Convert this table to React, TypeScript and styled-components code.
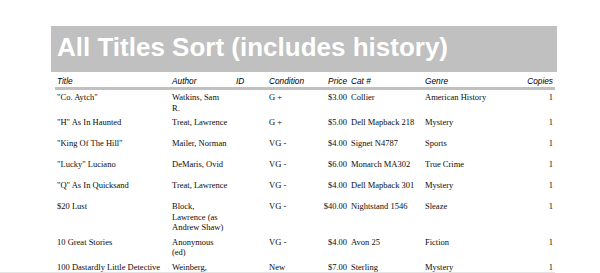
import React from "react";
import styled, { createGlobalStyle } from "styled-components";

const GlobalStyle = createGlobalStyle`
  html, body {
    margin: 0;
    padding: 0;
    background: #ffffff;
  }
  body {
    overflow: hidden;
  }
`;

const Page = styled.div`
  width: 600px;
  height: 273px;
  overflow: hidden;
  padding: 26px 0 0 51px;
  box-sizing: border-box;
  position: relative;
`;

const TitleBar = styled.div`
  width: 506px;
  height: 46px;
  box-sizing: border-box;
  background: #c0c0c0;
  padding: 4px 0 0 6px;
  font-family: "Liberation Sans", Arial, sans-serif;
  font-weight: bold;
  font-size: 26px;
  line-height: 34px;
  color: #ffffff;
  white-space: nowrap;
`;

const Table = styled.div`
  width: 500px;
  margin-left: 4px;
`;

const COLUMNS = "115px 64px 33px 40px 42px 74px 75px 57px";

const HeaderRow = styled.div`
  display: grid;
  grid-template-columns: ${COLUMNS};
  height: 18px;
  box-sizing: border-box;
  padding-bottom: 1px;
  align-items: end;
  border-bottom: 3px solid #c0c0c0;
`;

const HeadCell = styled.div<{ $right?: boolean }>`
  padding: 0 2px;
  font-family: "Liberation Sans", Arial, sans-serif;
  font-style: italic;
  font-size: 8.3px;
  line-height: 10px;
  color: #000000;
  text-align: ${(p) => (p.$right ? "right" : "left")};
  white-space: nowrap;
`;

const Row = styled.div`
  display: grid;
  grid-template-columns: ${COLUMNS};
  min-height: 21px;
  box-sizing: border-box;
  padding: 2px 0;
  align-items: start;
`;

const Cell = styled.div<{ $right?: boolean }>`
  padding: 0 2px;
  font-family: "Liberation Serif", "Times New Roman", serif;
  font-size: 8.5px;
  line-height: 10.5px;
  color: #0c0c0c;
  text-align: ${(p) => (p.$right ? "right" : "left")};
`;

const AuthorCell = styled(Cell)`
  padding-right: 6px;
`;

const FooterRule = styled.div`
  position: absolute;
  left: 0;
  top: 272px;
  width: 555px;
  height: 1px;
  background: #e4e4e4;
`;

type Book = {
  title: string;
  author: string;
  id: string;
  condition: string;
  price: string;
  cat: string;
  genre: string;
  copies: number;
};

const BOOKS: Book[] = [
  { title: '"Co. Aytch"', author: "Watkins, Sam R.", id: "", condition: "G +", price: "$3.00", cat: "Collier", genre: "American History", copies: 1 },
  { title: '"H" As In Haunted', author: "Treat, Lawrence", id: "", condition: "G +", price: "$5.00", cat: "Dell Mapback 218", genre: "Mystery", copies: 1 },
  { title: '"King Of The Hill"', author: "Mailer, Norman", id: "", condition: "VG -", price: "$4.00", cat: "Signet N4787", genre: "Sports", copies: 1 },
  { title: '"Lucky" Luciano', author: "DeMaris, Ovid", id: "", condition: "VG -", price: "$6.00", cat: "Monarch MA302", genre: "True Crime", copies: 1 },
  { title: '"Q" As In Quicksand', author: "Treat, Lawrence", id: "", condition: "VG -", price: "$4.00", cat: "Dell Mapback 301", genre: "Mystery", copies: 1 },
  { title: "$20 Lust", author: "Block, Lawrence (as Andrew Shaw)", id: "", condition: "VG -", price: "$40.00", cat: "Nightstand 1546", genre: "Sleaze", copies: 1 },
  { title: "10 Great Stories", author: "Anonymous (ed)", id: "", condition: "VG -", price: "$4.00", cat: "Avon 25", genre: "Fiction", copies: 1 },
  { title: "100 Dastardly Little Detective Stories", author: "Weinberg, Robert (ed)", id: "", condition: "New", price: "$7.00", cat: "Sterling", genre: "Mystery", copies: 1 },
];

const App = () => {
  return (
    <Page>
      <GlobalStyle />
      <TitleBar>All Titles Sort (includes history)</TitleBar>
      <Table>
        <HeaderRow>
          <HeadCell>Title</HeadCell>
          <HeadCell>Author</HeadCell>
          <HeadCell>ID</HeadCell>
          <HeadCell>Condition</HeadCell>
          <HeadCell $right>Price</HeadCell>
          <HeadCell>Cat #</HeadCell>
          <HeadCell>Genre</HeadCell>
          <HeadCell $right>Copies</HeadCell>
        </HeaderRow>
        {BOOKS.map((book) => (
          <Row key={book.title}>
            <Cell>{book.title}</Cell>
            <AuthorCell>{book.author}</AuthorCell>
            <Cell>{book.id}</Cell>
            <Cell>{book.condition}</Cell>
            <Cell $right>{book.price}</Cell>
            <Cell>{book.cat}</Cell>
            <Cell>{book.genre}</Cell>
            <Cell $right>{book.copies}</Cell>
          </Row>
        ))}
      </Table>
      <FooterRule />
    </Page>
  );
};

export default App;
